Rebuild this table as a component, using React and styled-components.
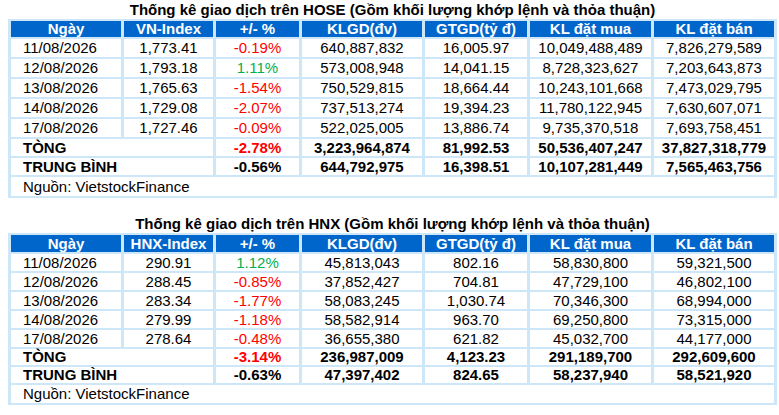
import React from "react";
import styled, { createGlobalStyle } from "styled-components";

const Global = createGlobalStyle`
  html, body { margin: 0; padding: 0; background: #ffffff; }
  body { font-family: "Liberation Sans", Arial, sans-serif; color: #000; }
`;

const Page = styled.div`
  width: 779px;
  height: 415px;
  padding: 0 2px 0 8px;
  box-sizing: border-box;
  display: flex;
  flex-direction: column;
  gap: 16px;
`;

const Block = styled.section`
  display: flex;
  flex-direction: column;
`;

const Title = styled.h2`
  margin: 0;
  height: 19px;
  font-size: 15px;
  line-height: 20px;
  font-weight: 700;
  text-align: center;
  white-space: nowrap;
`;

const Table = styled.table`
  width: 769px;
  table-layout: fixed;
  border-collapse: separate;
  border-spacing: 3px 2px;
  background: #cde7f8;
  font-size: 15px;
`;

const HeadCell = styled.th`
  height: ${(p) => p.$h}px;
  padding: 0;
  background: #0066cc;
  color: #ffffff;
  font-weight: 700;
  text-align: center;
  line-height: 16px;
  white-space: nowrap;
`;

const Cell = styled.td`
  height: ${(p) => p.$h}px;
  padding: ${(p) => (p.$left ? "0 0 0 12px" : "0")};
  background: #ffffff;
  text-align: ${(p) => (p.$left ? "left" : "center")};
  font-weight: ${(p) => (p.$bold ? 700 : 400)};
  color: ${(p) => (p.$tone === "up" ? "#00b050" : p.$tone === "down" ? "#ff0000" : "#000000")};
  line-height: 16px;
  white-space: nowrap;
`;

const widths = [110, 89, 83, 120, 102, 121, 120];

const tone = (v) => (v.startsWith("-") ? "down" : "up");

function StatTable({ title, indexLabel, rows, total, avg, rowH, headH }) {
  const heads = ["Ngày", indexLabel, "+/- %", "KLGD(đv)", "GTGD(tỷ đ)", "KL đặt mua", "KL đặt bán"];
  return (
    <Block>
      <Title>{title}</Title>
      <Table>
        <colgroup>
          {widths.map((w, i) => (
            <col key={i} style={{ width: w }} />
          ))}
        </colgroup>
        <thead>
          <tr>
            {heads.map((h) => (
              <HeadCell key={h} $h={headH}>{h}</HeadCell>
            ))}
          </tr>
        </thead>
        <tbody>
          {rows.map((r) => (
            <tr key={r[0]}>
              <Cell $h={rowH} $left>{r[0]}</Cell>
              <Cell $h={rowH}>{r[1]}</Cell>
              <Cell $h={rowH} $tone={tone(r[2])}>{r[2]}</Cell>
              <Cell $h={rowH}>{r[3]}</Cell>
              <Cell $h={rowH}>{r[4]}</Cell>
              <Cell $h={rowH}>{r[5]}</Cell>
              <Cell $h={rowH}>{r[6]}</Cell>
            </tr>
          ))}
          <tr>
            <Cell $h={rowH - 1} $left $bold colSpan={2}>TÒNG</Cell>
            <Cell $h={rowH - 1} $bold $tone="down">{total[0]}</Cell>
            {total.slice(1).map((v, i) => (
              <Cell key={i} $h={rowH - 1} $bold>{v}</Cell>
            ))}
          </tr>
          <tr>
            <Cell $h={rowH - 1} $left $bold colSpan={2}>TRUNG BÌNH</Cell>
            {avg.map((v, i) => (
              <Cell key={i} $h={rowH - 1} $bold>{v}</Cell>
            ))}
          </tr>
          <tr>
            <Cell $h={rowH + 1} $left colSpan={7}>Nguồn: VietstockFinance</Cell>
          </tr>
        </tbody>
      </Table>
    </Block>
  );
}

const hose = [
  ["11/08/2026", "1,773.41", "-0.19%", "640,887,832", "16,005.97", "10,049,488,489", "7,826,279,589"],
  ["12/08/2026", "1,793.18", "1.11%", "573,008,948", "14,041.15", "8,728,323,627", "7,203,643,873"],
  ["13/08/2026", "1,765.63", "-1.54%", "750,529,815", "18,664.44", "10,243,101,668", "7,473,029,795"],
  ["14/08/2026", "1,729.08", "-2.07%", "737,513,274", "19,394.23", "11,780,122,945", "7,630,607,071"],
  ["17/08/2026", "1,727.46", "-0.09%", "522,025,005", "13,886.74", "9,735,370,518", "7,693,758,451"],
];

const hnx = [
  ["11/08/2026", "290.91", "1.12%", "45,813,043", "802.16", "58,830,800", "59,321,500"],
  ["12/08/2026", "288.45", "-0.85%", "37,852,427", "704.81", "47,729,100", "46,802,100"],
  ["13/08/2026", "283.34", "-1.77%", "58,083,245", "1,030.74", "70,346,300", "68,994,000"],
  ["14/08/2026", "279.99", "-1.18%", "58,582,914", "963.70", "69,250,800", "73,315,000"],
  ["17/08/2026", "278.64", "-0.48%", "36,655,380", "621.82", "45,032,700", "44,177,000"],
];

export default function App() {
  return (
    <>
      <Global />
      <Page>
        <StatTable
          title="Thống kê giao dịch trên HOSE (Gồm khối lượng khớp lệnh và thỏa thuận)"
          indexLabel="VN-Index"
          rows={hose}
          total={["-2.78%", "3,223,964,874", "81,992.53", "50,536,407,247", "37,827,318,779"]}
          avg={["-0.56%", "644,792,975", "16,398.51", "10,107,281,449", "7,565,463,756"]}
          rowH={18}
          headH={16}
        />
        <StatTable
          title="Thống kê giao dịch trên HNX (Gồm khối lượng khớp lệnh và thỏa thuận)"
          indexLabel="HNX-Index"
          rows={hnx}
          total={["-3.14%", "236,987,009", "4,123.23", "291,189,700", "292,609,600"]}
          avg={["-0.63%", "47,397,402", "824.65", "58,237,940", "58,521,920"]}
          rowH={17}
          headH={17}
        />
      </Page>
    </>
  );
}
